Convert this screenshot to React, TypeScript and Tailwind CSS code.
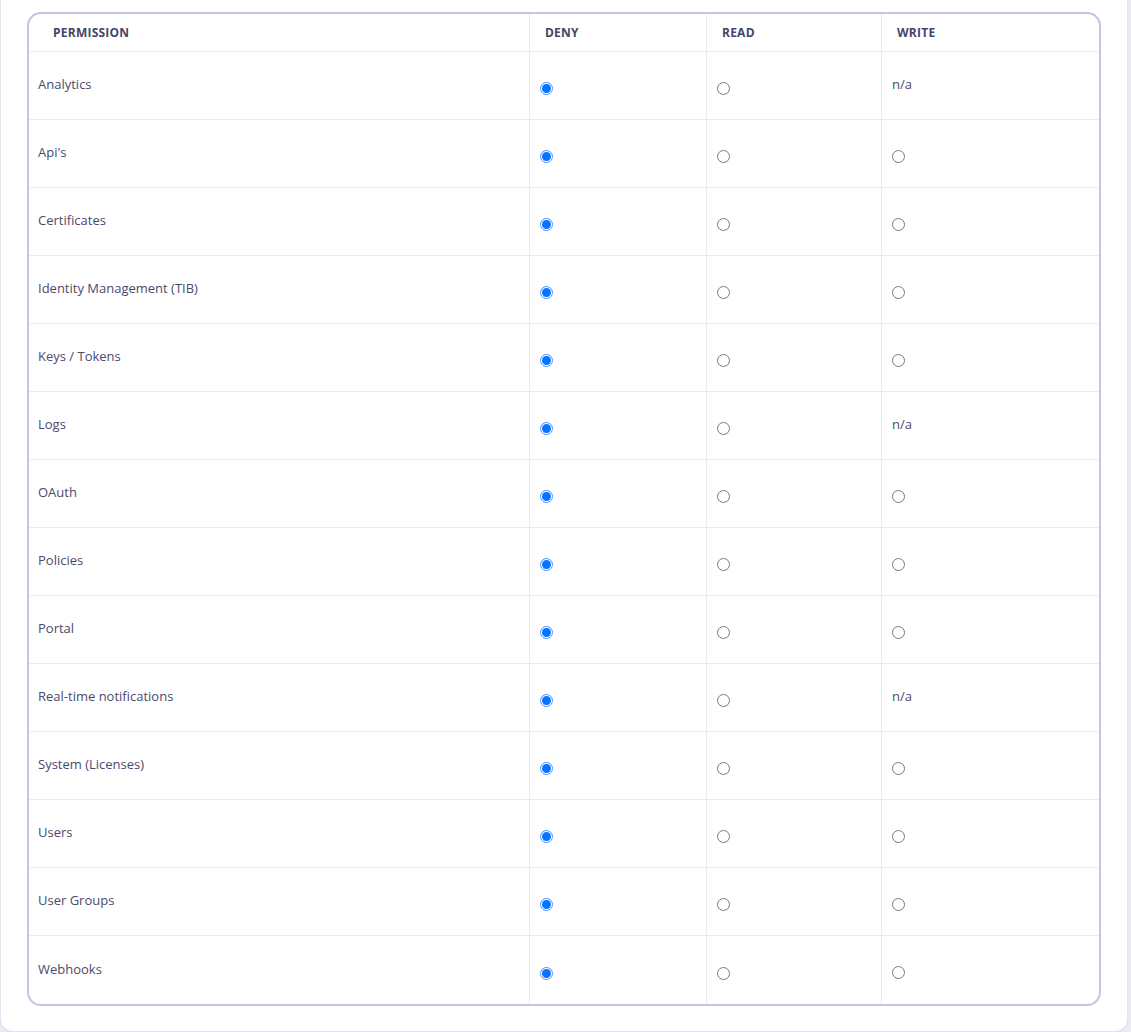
import React from "react";

type Row = { name: string; write: boolean };

const rows: Row[] = [
  { name: "Analytics", write: false },
  { name: "Api's", write: true },
  { name: "Certificates", write: true },
  { name: "Identity Management (TIB)", write: true },
  { name: "Keys / Tokens", write: true },
  { name: "Logs", write: false },
  { name: "OAuth", write: true },
  { name: "Policies", write: true },
  { name: "Portal", write: true },
  { name: "Real-time notifications", write: false },
  { name: "System (Licenses)", write: true },
  { name: "Users", write: true },
  { name: "User Groups", write: true },
  { name: "Webhooks", write: true },
];

function Radio({ checked }: { checked: boolean }) {
  if (checked) {
    return (
      <span className="mt-[6px] flex h-[13px] w-[13px] items-center justify-center rounded-full border border-[#4a94ff] bg-white">
        <span className="h-[9px] w-[9px] rounded-full bg-[#0a72ff]" />
      </span>
    );
  }
  return <span className="mt-[6px] block h-[13px] w-[13px] rounded-full border border-[#7a7a7a] bg-white" />;
}

export default function App() {
  return (
    <div
      className="min-h-[1032px] w-full bg-[#ebebf5] pl-[1px] pr-[4px] pb-[4px]"
      style={{ fontFamily: '"Open Sans", "Noto Sans", sans-serif' }}
    >
      <div className="-mt-[13px] rounded-[12px] bg-white px-[26px] pt-[25px] pb-[25px] shadow-[0_1px_3px_rgba(120,115,180,0.15)]">
        <div className="overflow-hidden rounded-[14px] border-2 border-[#c6c4e4]">
          <div className="grid grid-cols-[500px_177px_175px_1fr] text-[12px] font-bold uppercase tracking-[0.02em] text-[#46446a]">
            <div className="flex h-[38px] items-center border-b border-[#ebeaf6] pl-[24px]">Permission</div>
            <div className="flex h-[38px] items-center border-b border-l border-[#ebeaf6] pl-[15px]">Deny</div>
            <div className="flex h-[38px] items-center border-b border-l border-[#ebeaf6] pl-[15px]">Read</div>
            <div className="flex h-[38px] items-center border-b border-l border-[#ebeaf6] pl-[15px]">Write</div>
          </div>
          {rows.map((r, i) => {
            const last = i === rows.length - 1;
            const b = last ? "" : "border-b";
            return (
              <div
                key={r.name}
                className="grid grid-cols-[500px_177px_175px_1fr] text-[13px] text-[#4b4a6c]"
              >
                <div className={`flex h-[68px] items-center ${b} border-[#ebeaf6] pl-[9px] pb-[1px]`}>{r.name}</div>
                <div className={`flex h-[68px] items-center ${b} border-l border-[#ebeaf6] pl-[10px]`}>
                  <Radio checked />
                </div>
                <div className={`flex h-[68px] items-center ${b} border-l border-[#ebeaf6] pl-[10px]`}>
                  <Radio checked={false} />
                </div>
                <div className={`flex h-[68px] items-center ${b} border-l border-[#ebeaf6] pl-[10px] pb-[1px]`}>
                  {r.write ? <Radio checked={false} /> : "n/a"}
                </div>
              </div>
            );
          })}
        </div>
      </div>
    </div>
  );
}
